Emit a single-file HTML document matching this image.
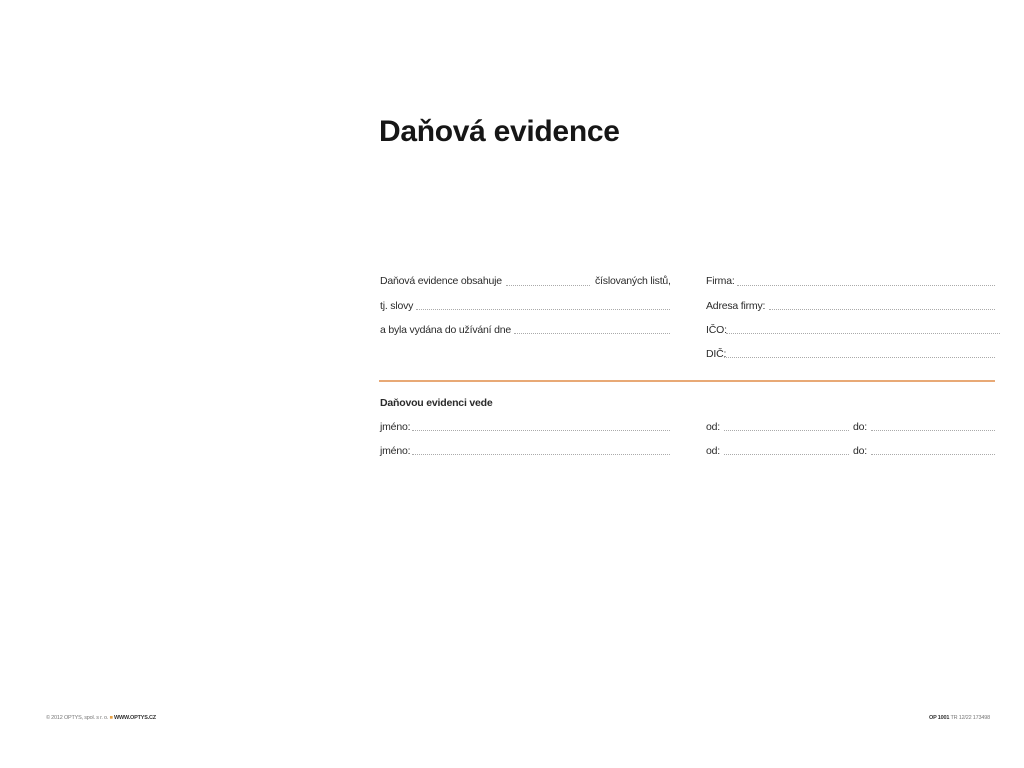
<!DOCTYPE html>
<html><head><meta charset="utf-8"><style>
body{margin:0;width:1024px;height:768px;background:#fff;position:relative;overflow:hidden;font-family:"Liberation Sans",sans-serif;color:#2a2a2a}
.t{position:absolute;font-size:10.5px;line-height:12px;white-space:nowrap;letter-spacing:-0.2px}
.d{position:absolute;height:0;border-bottom:1px dotted #aaa}
h1{position:absolute;left:379px;top:115px;margin:0;font-size:30px;font-weight:bold;letter-spacing:-0.3px;color:#161616}
</style></head><body>
<h1>Daňová evidence</h1>
<div class="t" style="left:380px;top:275px">Daňová evidence obsahuje</div>
<div class="d" style="left:506px;width:84px;top:285px"></div>
<div class="t" style="left:595px;top:275px">číslovaných listů,</div>
<div class="t" style="left:380px;top:300px">tj. slovy</div>
<div class="d" style="left:416px;width:254px;top:309px"></div>
<div class="t" style="left:380px;top:324px">a byla vydána do užívání dne</div>
<div class="d" style="left:514px;width:156px;top:333px"></div>

<div class="t" style="left:706px;top:275px">Firma:</div>
<div class="d" style="left:737px;width:258px;top:285px"></div>
<div class="t" style="left:706px;top:300px">Adresa firmy:</div>
<div class="d" style="left:769px;width:226px;top:309px"></div>
<div class="t" style="left:706px;top:324px">IČO:</div>
<div class="d" style="left:726px;width:274px;top:333px"></div>
<div class="t" style="left:706px;top:348px">DIČ:</div>
<div class="d" style="left:724px;width:271px;top:357px"></div>

<div style="position:absolute;left:379px;top:380px;width:616px;height:2px;background:#e8a976"></div>

<div class="t" style="left:380px;top:397px;font-weight:bold">Daňovou evidenci vede</div>
<div class="t" style="left:380px;top:421px">jméno:</div>
<div class="d" style="left:412px;width:258px;top:430px"></div>
<div class="t" style="left:380px;top:445px">jméno:</div>
<div class="d" style="left:412px;width:258px;top:454px"></div>
<div class="t" style="left:706px;top:421px">od:</div>
<div class="d" style="left:724px;width:125px;top:430px"></div>
<div class="t" style="left:853px;top:421px">do:</div>
<div class="d" style="left:871px;width:124px;top:430px"></div>
<div class="t" style="left:706px;top:445px">od:</div>
<div class="d" style="left:724px;width:125px;top:454px"></div>
<div class="t" style="left:853px;top:445px">do:</div>
<div class="d" style="left:871px;width:124px;top:454px"></div>

<div class="t" style="left:46px;top:712px;font-size:5.5px;color:#777">© 2012 OPTYS, spol. s r. o. <span style="color:#e8a040">■</span> <b style="color:#333">WWW.OPTYS.CZ</b></div>
<div class="t" style="left:929px;top:712px;font-size:5.5px;color:#777"><b style="color:#333">OP 1001</b> TR 12/22 173498</div>
</body></html>
